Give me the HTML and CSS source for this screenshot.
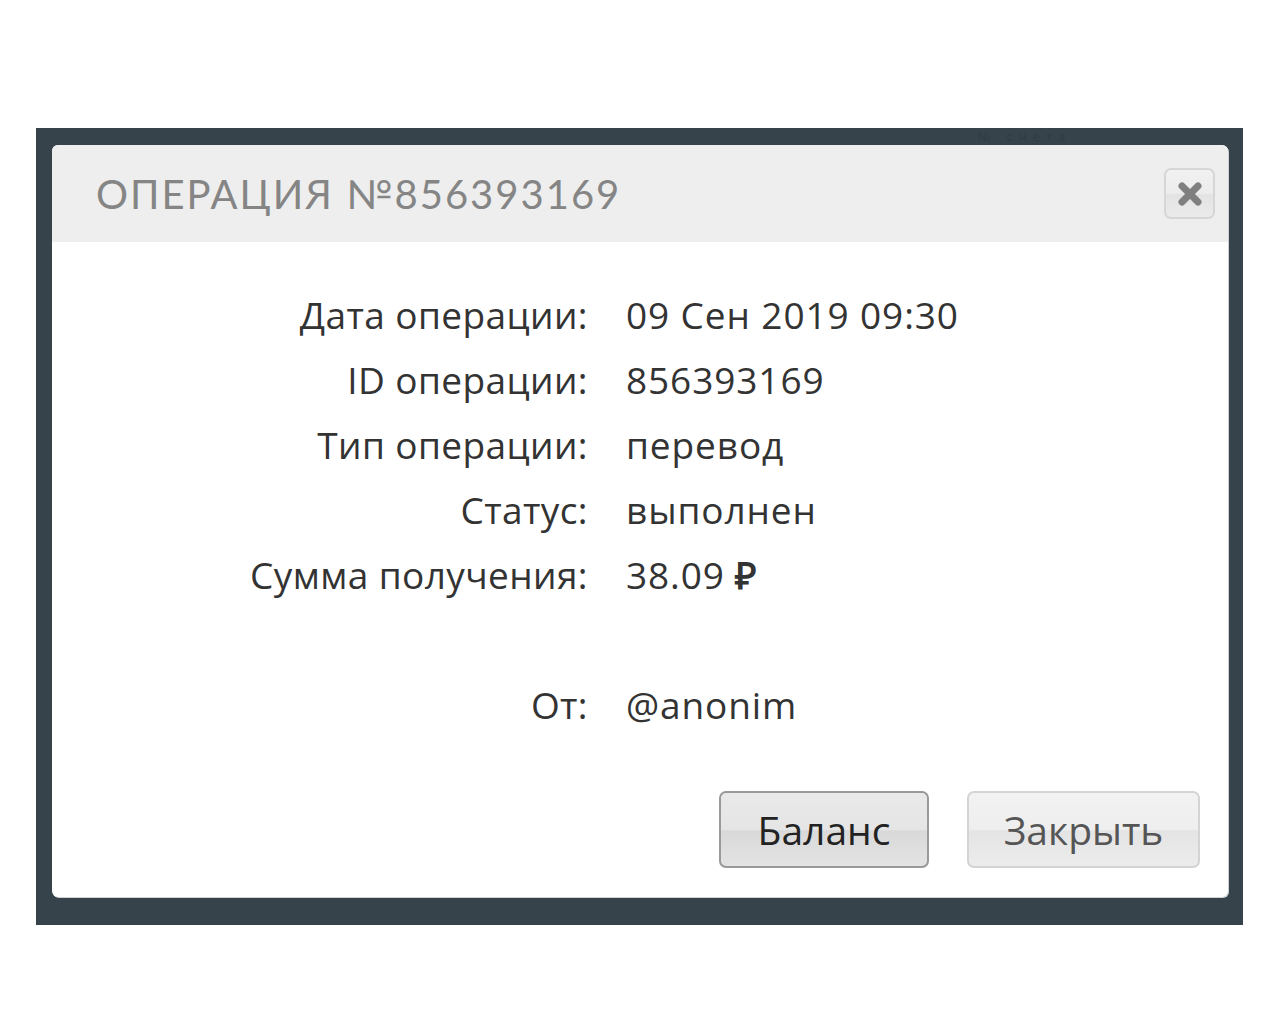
FILE: index.html
```
<!DOCTYPE html>
<html>
<head>
<meta charset="utf-8"/>
<title>Операция №856393169</title>
<link rel="stylesheet" href="styles.css">
</head>
<body>

<div class="backdrop">
<span class="behind">№ счета</span>

<div class="modal">
<div class="modal-head">
<h1>Операция №856393169</h1>
<button class="close" type="button" aria-label="Закрыть">
<svg width="28" height="28" viewBox="0 0 28 28"><path d="M6 6 L22 22 M22 6 L6 22" stroke="#7f7f7f" stroke-width="7" stroke-linecap="round"/></svg>
</button>
</div>

<div class="modal-body">
<dl class="info">
<dt>Дата операции:</dt><dd>09 Сен 2019 09:30</dd>
<dt>ID операции:</dt><dd>856393169</dd>
<dt>Тип операции:</dt><dd>перевод</dd>
<dt>Статус:</dt><dd>выполнен</dd>
<dt>Сумма получения:</dt><dd>38.09 <b class="rub">₽</b></dd>
<dt class="spacer"></dt><dd class="spacer"></dd>
<dt>От:</dt><dd>@anonim</dd>
</dl>
</div>

<div class="modal-foot">
<button class="btn btn-main" type="button">Баланс</button>
<button class="btn" type="button">Закрыть</button>
</div>
</div>
</div>

</body>
</html>
```

FILE: styles.css
```
body {
   margin: 0;
   background-color: white;
   font-family: "Open Sans", "Liberation Sans", sans-serif;
}

.backdrop {
   position: relative;
   margin: 128px 0 0 36px;
   width: 1207px;
   height: 797px;
   box-sizing: border-box;
   padding: 17px 15px 0 16px;
   background-color: #36434b;
   overflow: hidden;
}

.behind {
   position: absolute;
   top: 0;
   left: 942px;
   font-size: 13px;
   line-height: 16px;
   letter-spacing: 6px;
   color: #303b42;
}

.modal {
   position: relative;
   display: flex;
   flex-direction: column;
   height: 752px;
   background-color: white;
   border-radius: 6px;
   box-shadow: 1px 1px 0 #cfd2d4;
}

.modal-head {
   display: flex;
   align-items: center;
   justify-content: space-between;
   height: 97px;
   padding: 0 13px 0 44px;
   background-color: #eeeeee;
   border-radius: 6px 6px 0 0;
}

h1 {
   margin: 0;
   font-family: "Lato", sans-serif;
   font-weight: 400;
   font-size: 40px;
   letter-spacing: 2px;
   text-transform: uppercase;
   color: #858585;
}

.close {
   display: flex;
   align-items: center;
   justify-content: center;
   width: 51px;
   height: 51px;
   padding: 0;
   border: 2px solid #d6d6d6;
   border-radius: 7px;
   background: linear-gradient(#f1f1f1 0%, #ececec 50%, #e3e3e3 52%, #ebebeb 100%);
}

.modal-body {
   flex: 1;
   padding-top: 40px;
}

.info {
   display: grid;
   grid-template-columns: 536px 1fr;
   column-gap: 38px;
   margin: 0;
   font-size: 37px;
   letter-spacing: 0.4px;
   line-height: 65px;
   color: #333333;
}

.info dt {
   text-align: right;
}

.info dd {
   margin: 0;
   letter-spacing: 0.9px;
}

.info .spacer {
   height: 65px;
}

.rub {
   font-weight: 700;
}

.modal-foot {
   display: flex;
   justify-content: flex-end;
   gap: 38px;
   padding: 0 28px 29px 0;
}

.btn {
   width: 233px;
   height: 77px;
   font-family: "Open Sans", sans-serif;
   font-size: 39px;
   color: #555555;
   border: 2px solid #d4d4d4;
   border-radius: 7px;
   background: linear-gradient(#f2f2f2 0%, #eeeeee 50%, #e4e4e4 52%, #ececec 100%);
}

.btn-main {
   width: 210px;
   color: #222222;
   border-color: #999999;
   background: linear-gradient(#e9e9e9 0%, #e5e5e5 50%, #d9d9d9 52%, #e3e3e3 100%);
}
```
